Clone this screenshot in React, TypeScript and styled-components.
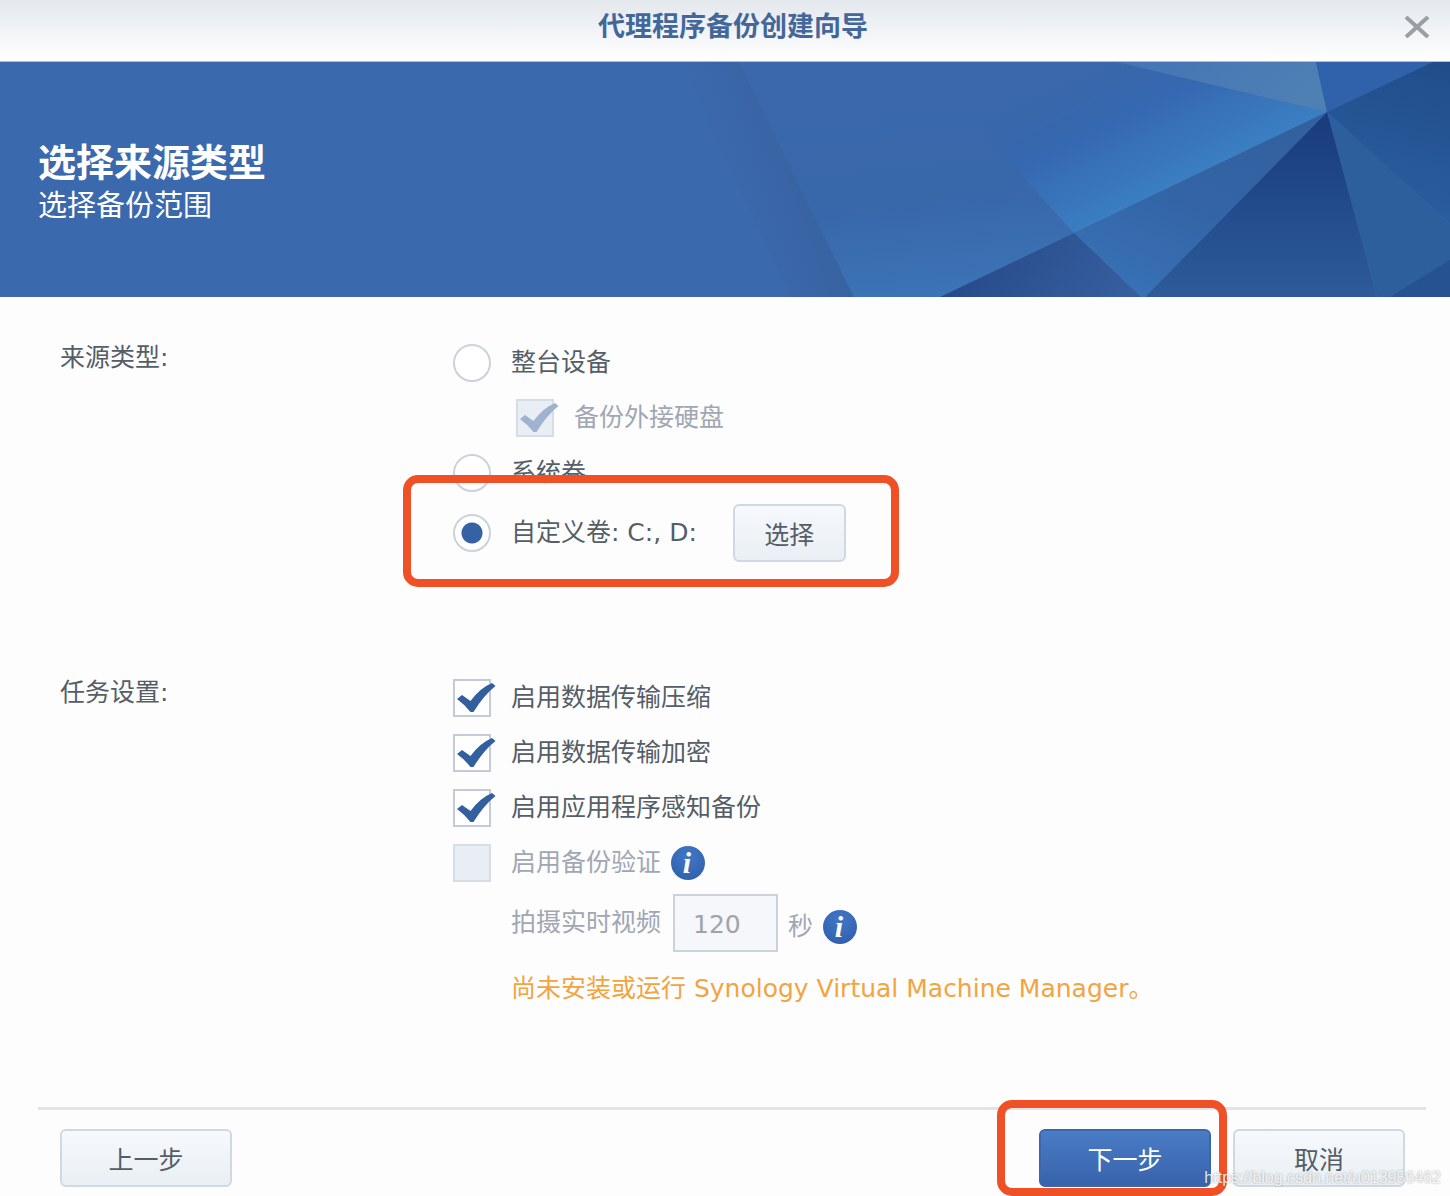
import React, { useState } from "react";
import styled, { createGlobalStyle } from "styled-components";

const GlobalStyle = createGlobalStyle`
  *, *::before, *::after { box-sizing: border-box; }
  body { margin: 0; background: #fdfdfe; }
  body, button, input {
    font-family: "DejaVu Sans", "Noto Sans CJK SC", sans-serif;
    font-size: 25px;
    color: #555d66;
  }
`;

const Wizard = styled.div`
  position: relative;
  display: flex;
  flex-direction: column;
  min-height: 100vh;
`;

const TitleBar = styled.header`
  display: grid;
  grid-template-columns: 64px 1fr 48px;
  align-items: center;
  height: 62px;
  padding: 0 9px 8px;
  border-bottom: 1px solid #a9c2e0;
  background: linear-gradient(#e3e8ec, #f4f6f9 60%, #ffffff);
`;

const Title = styled.h1`
  grid-column: 2;
  margin: 0;
  text-align: center;
  font-size: 27px;
  line-height: 40px;
  font-weight: 700;
  color: #44679a;
`;

const CloseButton = styled.button`
  display: grid;
  place-items: center;
  width: 48px;
  height: 48px;
  padding: 0;
  border: 0;
  background: none;
  cursor: pointer;
`;

const Banner = styled.div`
  position: relative;
  height: 235px;
  padding: 79px 38px 0;
  overflow: hidden;
  background: #3b69ad;
  color: #ffffff;
`;

const BannerArt = styled.svg`
  position: absolute;
  top: 0;
  right: 0;
  height: 100%;
`;

const BannerTitle = styled.h2`
  position: relative;
  margin: 0;
  font-size: 38px;
  line-height: 44px;
  font-weight: 700;
`;

const BannerSubtitle = styled.p`
  position: relative;
  margin: 0;
  font-size: 29px;
  line-height: 42px;
`;

const Form = styled.form`
  display: flex;
  flex-direction: column;
  flex: 1;
`;

const Body = styled.div`
  display: flex;
  flex-direction: column;
  flex: 1;
  gap: 104px;
  padding: 38px 60px 0;
`;

const Section = styled.div`
  display: grid;
  grid-template-columns: 393px 1fr;
  align-items: start;
`;

const SectionLabel = styled.div`
  line-height: 46px;
`;

const Rows = styled.div`
  display: flex;
  flex-direction: column;
  align-items: flex-start;
`;

const Row = styled.div<{ $tall?: boolean; $indent?: boolean }>`
  position: relative;
  display: flex;
  align-items: center;
  height: ${(p) => (p.$tall ? 66 : 55)}px;
  padding-left: ${(p) => (p.$indent ? 58 : 0)}px;
`;

const NestedRow = styled(Row)`
  padding-left: 63px;
`;

const Label = styled.label<{ $muted?: boolean }>`
  display: flex;
  align-items: center;
  gap: 20px;
  line-height: 36px;
  white-space: nowrap;
  color: ${(p) => (p.$muted ? "#a0a7b3" : "inherit")};
`;

const Radio = styled.input`
  appearance: none;
  width: 38px;
  height: 38px;
  margin: 0;
  border: 2px solid #ccd2dc;
  border-radius: 50%;
  background: #ffffff;
  &:checked {
    background: radial-gradient(circle, #3561a5 0 10px, #ffffff 11px);
  }
`;

const CheckFrame = styled.span`
  position: relative;
  display: inline-flex;
`;

const CheckInput = styled.input`
  appearance: none;
  width: 38px;
  height: 38px;
  margin: 0;
  border: 2px solid #c3cbd6;
  background: #ffffff;
  &:disabled {
    border-color: #d5dde7;
    background: #e8eef4;
  }
`;

const CheckMark = styled.svg`
  position: absolute;
  top: 0;
  left: 0;
  overflow: visible;
  pointer-events: none;
`;

const Button = styled.button<{ $primary?: boolean; $wide?: boolean }>`
  width: ${(p) => (p.$wide ? 172 : 113)}px;
  height: 58px;
  padding: 0;
  border: 2px solid ${(p) => (p.$primary ? "#3a67ac" : "#d0d8e2")};
  border-radius: 6px;
  background: ${(p) =>
    p.$primary
      ? "linear-gradient(#4a7cc6, #3763ab)"
      : "linear-gradient(#f6f9fd, #e9eff4)"};
  color: ${(p) => (p.$primary ? "#ffffff" : "#555d66")};
  cursor: pointer;
`;

const SelectButton = styled(Button)`
  margin-left: 36px;
`;

const Seconds = styled.input`
  width: 105px;
  height: 58px;
  margin: 0 10px 0 12px;
  padding: 2px 18px 0;
  border: 2px solid #ccd2dc;
  border-radius: 0;
  background: #f5f7fa;
  color: #a0a4aa;
`;

const Suffix = styled.span`
  display: flex;
  align-items: center;
  padding-top: 8px;
  line-height: 36px;
  color: #a0a7b3;
`;

const InfoButton = styled.button`
  display: grid;
  place-items: center;
  width: 34px;
  height: 34px;
  margin-left: 10px;
  padding: 0 2px 0 0;
  border: 0;
  border-radius: 50%;
  background: radial-gradient(circle at 50% 30%, #4277c6, #2d5ca9);
  color: #ffffff;
  font: italic 700 30px/34px "Liberation Serif", serif;
  cursor: pointer;
`;

const Warning = styled.p`
  margin: 0;
  line-height: 36px;
  color: #f2a440;
`;

const Footer = styled.footer`
  display: flex;
  gap: 22px;
  margin: 0 24px 0 38px;
  padding: 19px 21px 9px 22px;
  border-top: 3px solid #e3e3e4;
`;

const NextSlot = styled.div`
  position: relative;
  margin-left: auto;
`;

const Highlight = styled.span`
  position: absolute;
  border: 8px solid #f05025;
  border-radius: 15px;
  pointer-events: none;
`;

const VolumeHighlight = styled(Highlight)`
  inset: -25px -53px -21px -50px;
`;

const NextHighlight = styled(Highlight)`
  inset: -29px -16px -9px -42px;
`;

const Watermark = styled.div`
  position: absolute;
  right: 9px;
  bottom: 8px;
  font: 16px/20px "Liberation Sans", sans-serif;
  color: rgba(255, 255, 255, 0.85);
  text-shadow: 0 0 2px rgba(90, 90, 90, 0.6);
  pointer-events: none;
`;

type CheckProps = {
  label: string;
  defaultChecked?: boolean;
  disabled?: boolean;
};

function Check({ label, defaultChecked = false, disabled = false }: CheckProps) {
  const [on, setOn] = useState(defaultChecked);
  return (
    <Label $muted={disabled}>
      <CheckFrame>
        <CheckInput
          type="checkbox"
          checked={on}
          disabled={disabled}
          onChange={(e) => setOn(e.target.checked)}
        />
        {on && (
          <CheckMark width="38" height="38" viewBox="0 0 38 38" aria-hidden="true">
            <path
              d="M4 20 L9 16 L17.5 22 Q27 9 39 4 L42.5 7 Q31 16 20.5 33 L17.5 33 Q11 25 4 20Z"
              fill={disabled ? "#9fb3d0" : "#335f9f"}
            />
          </CheckMark>
        )}
      </CheckFrame>
      {label}
    </Label>
  );
}

function Facets() {
  return (
    <BannerArt width="770" height="235" viewBox="680 0 770 235" aria-hidden="true">
      <defs>
        <linearGradient id="strip" gradientUnits="userSpaceOnUse" x1="720" y1="120" x2="800" y2="92">
          <stop offset="0" stopColor="#3863a2" stopOpacity="0" />
          <stop offset="1" stopColor="#3863a2" />
        </linearGradient>
        <linearGradient id="field" x1="0.2" y1="0" x2="0.5" y2="1">
          <stop offset="0" stopColor="#3b68ac" />
          <stop offset="0.55" stopColor="#3867aa" />
          <stop offset="1" stopColor="#3c76b9" />
        </linearGradient>
        <linearGradient id="glow" gradientUnits="userSpaceOnUse" x1="1020" y1="30" x2="1095" y2="180">
          <stop offset="0" stopColor="#3665a9" stopOpacity="0" />
          <stop offset="0.4" stopColor="#3568b1" />
          <stop offset="1" stopColor="#3c82c5" />
        </linearGradient>
        <linearGradient id="mist" x1="0" y1="0" x2="1" y2="0.3">
          <stop offset="0" stopColor="#4374b5" />
          <stop offset="1" stopColor="#4e80b4" />
        </linearGradient>
        <linearGradient id="blade" x1="0.2" y1="1" x2="0.8" y2="0">
          <stop offset="0" stopColor="#3872b7" />
          <stop offset="0.5" stopColor="#3364a5" />
          <stop offset="1" stopColor="#33609f" />
        </linearGradient>
        <linearGradient id="deep" x1="0.5" y1="0" x2="0.5" y2="1">
          <stop offset="0" stopColor="#193b7d" />
          <stop offset="0.5" stopColor="#224b8b" />
          <stop offset="1" stopColor="#2e5b9a" />
        </linearGradient>
        <linearGradient id="low" x1="0" y1="0.5" x2="1" y2="0.7">
          <stop offset="0" stopColor="#264988" />
          <stop offset="1" stopColor="#365f9f" />
        </linearGradient>
        <linearGradient id="east" x1="0.8" y1="0" x2="0.6" y2="1">
          <stop offset="0" stopColor="#214d8b" />
          <stop offset="1" stopColor="#2b5f9f" />
        </linearGradient>
      </defs>
      <polygon points="680,0 739,0 854,235 790,235" fill="url(#strip)" />
      <polygon points="739,0 1450,0 1450,235 854,235" fill="url(#field)" />
      <polygon points="918,0 1117,0 1327,50 1074,171" fill="url(#glow)" />
      <polygon points="1117,0 1316,0 1327,50" fill="url(#mist)" />
      <polygon points="1316,0 1433,0 1327,50" fill="#2f62aa" />
      <polygon points="1433,0 1450,0 1450,162 1327,50" fill="url(#east)" />
      <polygon points="1327,50 1450,162 1450,235 1377,235" fill="#2d5f9d" />
      <polygon points="1450,198 1450,235 1390,235" fill="#275291" />
      <polygon points="1327,50 1377,235 1145,235" fill="url(#deep)" />
      <polygon points="1327,50 1145,235 1141,235 1074,171" fill="url(#blade)" />
      <polygon points="1074,171 1141,235 940,235" fill="url(#low)" />
    </BannerArt>
  );
}

export default function App() {
  const [source, setSource] = useState("custom");
  const pick = (e: React.ChangeEvent<HTMLInputElement>) => setSource(e.target.value);

  return (
    <Wizard>
      <GlobalStyle />
      <TitleBar>
        <Title>代理程序备份创建向导</Title>
        <CloseButton type="button" aria-label="关闭">
          <svg width="26" height="22" viewBox="0 0 26 22" aria-hidden="true">
            <path d="M2 1 L24 21 M24 1 L2 21" stroke="#9b9ea2" strokeWidth="4" fill="none" />
          </svg>
        </CloseButton>
      </TitleBar>

      <Banner>
        <Facets />
        <BannerTitle>选择来源类型</BannerTitle>
        <BannerSubtitle>选择备份范围</BannerSubtitle>
      </Banner>

      <Form onSubmit={(e) => e.preventDefault()}>
        <Body>
          <Section role="radiogroup" aria-labelledby="source-label">
            <SectionLabel id="source-label">来源类型:</SectionLabel>
            <Rows>
              <Row>
                <Label>
                  <Radio type="radio" name="source" value="device" checked={source === "device"} onChange={pick} />
                  整台设备
                </Label>
              </Row>
              <NestedRow>
                <Check label="备份外接硬盘" defaultChecked disabled />
              </NestedRow>
              <Row>
                <Label>
                  <Radio type="radio" name="source" value="system" checked={source === "system"} onChange={pick} />
                  系统卷
                </Label>
              </Row>
              <Row $tall>
                <Label>
                  <Radio type="radio" name="source" value="custom" checked={source === "custom"} onChange={pick} />
                  自定义卷: C:, D:
                </Label>
                <SelectButton type="button">选择</SelectButton>
                <VolumeHighlight />
              </Row>
            </Rows>
          </Section>

          <Section role="group" aria-labelledby="task-label">
            <SectionLabel id="task-label">任务设置:</SectionLabel>
            <Rows>
              <Row>
                <Check label="启用数据传输压缩" defaultChecked />
              </Row>
              <Row>
                <Check label="启用数据传输加密" defaultChecked />
              </Row>
              <Row>
                <Check label="启用应用程序感知备份" defaultChecked />
              </Row>
              <Row>
                <Check label="启用备份验证" disabled />
                <InfoButton type="button" aria-label="备份验证说明">i</InfoButton>
              </Row>
              <Row $tall $indent>
                <Label $muted htmlFor="seconds">拍摄实时视频</Label>
                <Seconds id="seconds" type="text" defaultValue="120" disabled />
                <Suffix>
                  秒
                  <InfoButton type="button" aria-label="实时视频说明">i</InfoButton>
                </Suffix>
              </Row>
              <Row $tall $indent>
                <Warning>尚未安装或运行 Synology Virtual Machine Manager。</Warning>
              </Row>
            </Rows>
          </Section>
        </Body>

        <Footer>
          <Button type="button" $wide>上一步</Button>
          <NextSlot>
            <Button type="submit" $primary $wide>下一步</Button>
            <NextHighlight />
          </NextSlot>
          <Button type="button" $wide>取消</Button>
        </Footer>
      </Form>
      <Watermark>https://blog.csdn.net/u013956462</Watermark>
    </Wizard>
  );
}
